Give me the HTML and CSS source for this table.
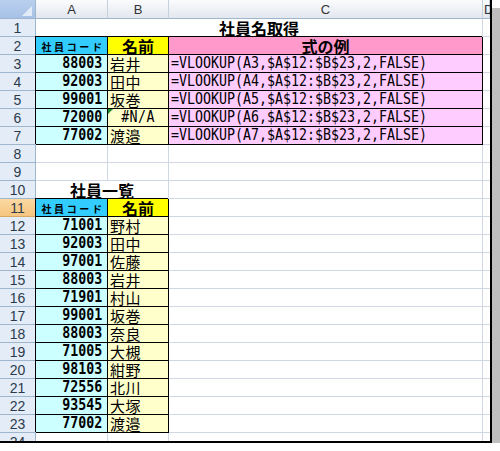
FILE: index.html
```html
<!DOCTYPE html>
<html lang="ja">
<head>
<meta charset="utf-8">
<title>社員名取得</title>
<link rel="stylesheet" href="styles.css">
</head>
<body>
<div class="frame">
  <div class="sheet">
    <div class="c corner"><span class="tri"></span></div>
    <div class="c ch">A</div>
    <div class="c ch">B</div>
    <div class="c ch">C</div>
    <div class="c ch chd">D</div>

    <div class="c rh">1</div>
    <div class="c title span3">社員名取得</div>
    <div class="c d"></div>

    <div class="c rh">2</div>
    <div class="c b hcode">社員コード</div>
    <div class="c b hname">名前</div>
    <div class="c b hform">式の例</div>
    <div class="c d"></div>

    <div class="c rh">3</div>
    <div class="c b code"><span class="m r">88003</span></div>
    <div class="c b name">岩井</div>
    <div class="c b form"><span class="m l">=VLOOKUP(A3,$A$12:$B$23,2,FALSE)</span></div>
    <div class="c d"></div>

    <div class="c rh">4</div>
    <div class="c b code"><span class="m r">92003</span></div>
    <div class="c b name">田中</div>
    <div class="c b form"><span class="m l">=VLOOKUP(A4,$A$12:$B$23,2,FALSE)</span></div>
    <div class="c d"></div>

    <div class="c rh">5</div>
    <div class="c b code"><span class="m r">99001</span></div>
    <div class="c b name">坂巻</div>
    <div class="c b form"><span class="m l">=VLOOKUP(A5,$A$12:$B$23,2,FALSE)</span></div>
    <div class="c d"></div>

    <div class="c rh">6</div>
    <div class="c b code"><span class="m r">72000</span></div>
    <div class="c b name err"><span class="flag"></span><span class="m ctr">#N/A</span></div>
    <div class="c b form"><span class="m l">=VLOOKUP(A6,$A$12:$B$23,2,FALSE)</span></div>
    <div class="c d"></div>

    <div class="c rh">7</div>
    <div class="c b code"><span class="m r">77002</span></div>
    <div class="c b name">渡邉</div>
    <div class="c b form"><span class="m l">=VLOOKUP(A7,$A$12:$B$23,2,FALSE)</span></div>
    <div class="c d"></div>

    <div class="c rh">8</div>
    <div class="c"></div><div class="c"></div><div class="c"></div><div class="c d"></div>

    <div class="c rh">9</div>
    <div class="c"></div><div class="c"></div><div class="c"></div><div class="c d"></div>

    <div class="c rh">10</div>
    <div class="c title span2">社員一覧</div>
    <div class="c"></div>
    <div class="c d"></div>

    <div class="c rh sel">11</div>
    <div class="c b hcode">社員コード</div>
    <div class="c b hname">名前</div>
    <div class="c"></div>
    <div class="c d"></div>

    <div class="c rh">12</div>
    <div class="c b code"><span class="m r">71001</span></div>
    <div class="c b name">野村</div>
    <div class="c"></div><div class="c d"></div>

    <div class="c rh">13</div>
    <div class="c b code"><span class="m r">92003</span></div>
    <div class="c b name">田中</div>
    <div class="c"></div><div class="c d"></div>

    <div class="c rh">14</div>
    <div class="c b code"><span class="m r">97001</span></div>
    <div class="c b name">佐藤</div>
    <div class="c"></div><div class="c d"></div>

    <div class="c rh">15</div>
    <div class="c b code"><span class="m r">88003</span></div>
    <div class="c b name">岩井</div>
    <div class="c"></div><div class="c d"></div>

    <div class="c rh">16</div>
    <div class="c b code"><span class="m r">71901</span></div>
    <div class="c b name">村山</div>
    <div class="c"></div><div class="c d"></div>

    <div class="c rh">17</div>
    <div class="c b code"><span class="m r">99001</span></div>
    <div class="c b name">坂巻</div>
    <div class="c"></div><div class="c d"></div>

    <div class="c rh">18</div>
    <div class="c b code"><span class="m r">88003</span></div>
    <div class="c b name">奈良</div>
    <div class="c"></div><div class="c d"></div>

    <div class="c rh">19</div>
    <div class="c b code"><span class="m r">71005</span></div>
    <div class="c b name">大槻</div>
    <div class="c"></div><div class="c d"></div>

    <div class="c rh">20</div>
    <div class="c b code"><span class="m r">98103</span></div>
    <div class="c b name">紺野</div>
    <div class="c"></div><div class="c d"></div>

    <div class="c rh">21</div>
    <div class="c b code"><span class="m r">72556</span></div>
    <div class="c b name">北川</div>
    <div class="c"></div><div class="c d"></div>

    <div class="c rh">22</div>
    <div class="c b code"><span class="m r">93545</span></div>
    <div class="c b name">大塚</div>
    <div class="c"></div><div class="c d"></div>

    <div class="c rh">23</div>
    <div class="c b code"><span class="m r">77002</span></div>
    <div class="c b name">渡邉</div>
    <div class="c"></div><div class="c d"></div>

    <div class="c rh">24</div>
    <div class="c"></div><div class="c"></div><div class="c"></div><div class="c d"></div>
  </div>
</div>
</body>
</html>
```

FILE: styles.css
```css
html, body {
  margin: 0;
  padding: 0;
  background: #fff;
}

.frame {
  width: 490px;
  height: 441px;
  border-right: 2px solid #000;
  border-bottom: 2px solid #000;
  box-shadow: 8px 8px 0 #bfbfbf;
  overflow: hidden;
  background: #fff;
}

.sheet {
  display: grid;
  grid-template-columns: 36px 72px 61px 314px 7px;
  grid-template-rows: 19px;
  grid-auto-rows: 18px;
}

.c {
  box-sizing: border-box;
  border-right: 1px solid #d0d7e5;
  border-bottom: 1px solid #d0d7e5;
  white-space: nowrap;
  position: relative;
  font-family: "Noto Sans CJK JP", sans-serif;
  font-size: 15px;
  line-height: 17px;
  color: #000;
  background: #fff;
}

.d {
  border-right: 0;
  overflow: hidden;
}

/* headers */
.corner {
  background: linear-gradient(#b9cfee, #a7c2e7);
  border-right-color: #9eb6ce;
  border-bottom-color: #9eb6ce;
}

.tri {
  position: absolute;
  right: 3px;
  bottom: 2px;
  width: 0;
  height: 0;
  border-left: 10px solid transparent;
  border-bottom: 10px solid #e3ebf6;
}

.ch {
  background: linear-gradient(#fbfcfd, #e2e7ee);
  border-right-color: #c5d0dd;
  border-bottom-color: #9eb6ce;
  text-align: center;
  font-family: "Liberation Sans", sans-serif;
  font-size: 13px;
  line-height: 17px;
  padding-top: 1px;
  color: #333;
}

.chd {
  text-align: left;
  padding-left: 1px;
}

.rh {
  background: #e4ecf7;
  border-right-color: #9eb6ce;
  border-bottom-color: #9eb6ce;
  text-align: center;
  font-family: "Liberation Sans", sans-serif;
  font-size: 14px;
  line-height: 16px;
  padding-top: 1px;
  color: #2b3b4d;
}

.rh.sel {
  background: linear-gradient(#fbd9a3, #f6c57f);
  border-bottom-color: #d7a960;
}

/* merged title cells */
.span3 { grid-column: span 3; }
.span2 { grid-column: span 2; }

.title {
  text-align: center;
  font-weight: bold;
  font-size: 16px;
  line-height: 16px;
  padding-top: 1px;
}

/* bordered cells */
.b {
  border-right-color: #000;
  border-bottom-color: #000;
  box-shadow: -1px -1px 0 #000;
}

.hcode {
  background: #33ccff;
  text-align: center;
  font-weight: bold;
  font-size: 10px;
  letter-spacing: 2.6px;
  padding-left: 3px;
  line-height: 15px;
  padding-top: 2px;
}

.hname,
.hform {
  text-align: center;
  font-weight: bold;
  font-size: 16px;
  line-height: 16px;
  padding-top: 1px;
}

.hname { background: #ffff00; }
.hform { background: #ff99cc; }

.code {
  background: #ccffff;
  text-align: right;
  padding-right: 5px;
}

.name {
  background: #ffffcc;
  padding-left: 2px;
  line-height: 17px;
  letter-spacing: 0.5px;
}

.err {
  text-align: center;
  padding-left: 0;
}

.flag {
  position: absolute;
  left: 0;
  top: 0;
  width: 0;
  height: 0;
  border-top: 5px solid #1e8a2e;
  border-right: 5px solid transparent;
}

.form {
  background: #ffccff;
  padding-left: 2px;
}

/* half-width gothic style text */
.m {
  display: inline-block;
  vertical-align: top;
  font-family: "DejaVu Sans Mono", monospace;
  font-size: 15px;
  line-height: 17px;
  transform: scaleX(0.886);
}

.code .m {
  font-weight: bold;
}

.m.l { transform-origin: left center; }
.m.r { transform-origin: right center; }
.m.ctr { transform-origin: center center; }
```
